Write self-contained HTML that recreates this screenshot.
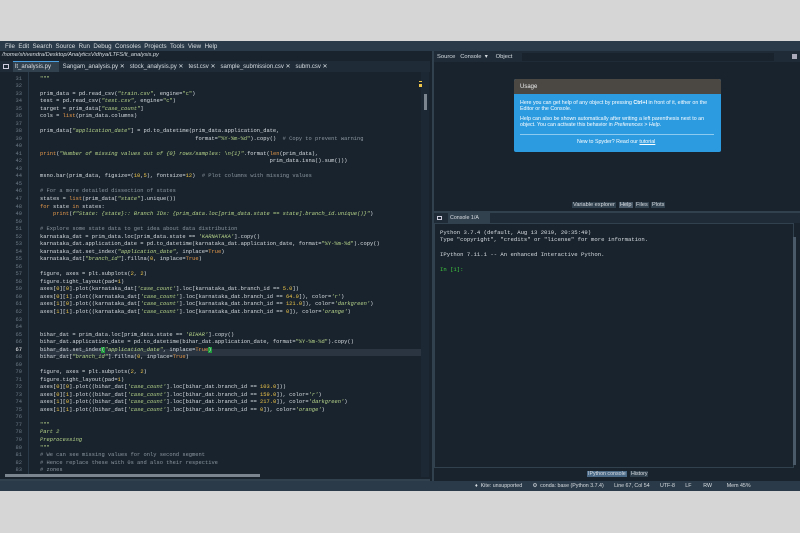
<!DOCTYPE html>
<html><head><meta charset="utf-8"><style>
*{margin:0;padding:0;box-sizing:border-box}
body{width:800px;height:533px;background:#d6d6d6;position:relative;overflow:hidden;font-family:"Liberation Sans",sans-serif}
.a{position:absolute}
#ide{left:0;top:41px;width:800px;height:450px;background:#19232d}
.mono{font-family:"Liberation Mono",monospace;font-size:5.4px;white-space:pre;color:#d8dde2}
.ln{position:absolute;top:0;left:0;width:22px;text-align:right;color:#6c7a86}
.cd{position:absolute;top:0;left:40px}
.s{color:#b7d58a}.si{color:#b7d58a;font-style:italic}.k{color:#e79a4b}.n{color:#f0c74a}.c{color:#8a96a0}.g{color:#b7d58a;font-style:italic}
.ui{font-size:5.3px;color:#d8dde2}
</style></head><body>
<div id="ide" class="a">
 <div class="a" style="left:0;top:0;width:800px;height:10px;background:#2a3a48"></div>
 <div class="a ui" style="left:5px;top:1.5px;white-space:pre;font-size:6.2px">File  Edit  Search  Source  Run  Debug  Consoles  Projects  Tools  View  Help</div>
 <div class="a ui" style="left:2px;top:11px;font-style:italic;font-size:5.7px">/home/shivendra/Desktop/AnalyticsVidhya/LTFS/lt_analysis.py</div>
 <div class="a" style="left:0;top:20px;width:430px;height:11px;background:#1f2c38"></div>
 <div class="a" style="left:3px;top:23px;width:6px;height:5px;border:1px solid #ccd"></div>
 <div class="a" style="left:13px;top:20px;width:46px;height:11px;background:#32414e;border-top:1px solid #4aa0e0"></div>
 <div class="a ui" style="left:15px;top:22px;white-space:pre;font-size:6px">lt_analysis.py       Sangam_analysis.py ✕   stock_analysis.py ✕   test.csv ✕   sample_submission.csv ✕   subm.csv ✕</div>
 <div class="a" style="left:432px;top:10px;width:368px;height:11px;background:#1f2c38"></div>
 <div class="a ui" style="left:437px;top:13px;white-space:pre;font-size:5.8px">Source   Console  ▾     Object</div>
 <div class="a" style="left:522px;top:12px;width:252px;height:8px;background:#19232d"></div>
 <div class="a" style="left:792px;top:13px;width:5px;height:5px;background:#aab"></div>
 <div class="a" style="left:432px;top:10px;width:2px;height:440px;background:#32414e"></div>
 <div class="a" style="left:514px;top:38px;width:207px;height:73px;background:#2d9be0;border-radius:2px"></div>
 <div class="a" style="left:514px;top:38px;width:207px;height:15px;background:#4b4844;border-radius:2px 2px 0 0"></div>
 <div class="a ui" style="left:520px;top:43px;font-size:6px;color:#eee">Usage</div>
 <div class="a ui" style="left:520px;top:59px;width:200px;color:#fff;line-height:6.2px">Here you can get help of any object by pressing <b>Ctrl+I</b> in front of it, either on the Editor or the Console.</div>
 <div class="a ui" style="left:520px;top:75px;width:200px;color:#fff;line-height:6.2px">Help can also be shown automatically after writing a left parenthesis next to an object. You can activate this behavior in <i>Preferences &gt; Help</i>.</div>
 <div class="a" style="left:520px;top:93px;width:194px;height:1px;background:#8ccaf0"></div>
 <div class="a ui" style="left:577px;top:98px;color:#fff">New to Spyder? Read our <u>tutorial</u></div>
 <div class="a ui" style="left:572px;top:161px;white-space:pre;background:#32414e;padding:0 1px;font-size:5.6px">Variable explorer</div>
 <div class="a ui" style="left:619px;top:161px;background:#4b5a68;padding:0 1px;font-size:5.6px">Help</div>
 <div class="a ui" style="left:635px;top:161px;background:#32414e;padding:0 1px;font-size:5.6px">Files</div>
 <div class="a ui" style="left:651px;top:161px;background:#32414e;padding:0 1px;font-size:5.6px">Plots</div>
 <div class="a" style="left:434px;top:170px;width:366px;height:2px;background:#32414e"></div>
 <div class="a" style="left:434px;top:172px;width:366px;height:10px;background:#1f2c38"></div>
 <div class="a" style="left:448px;top:172px;width:42px;height:10px;background:#32414e"></div>
 <div class="a ui" style="left:450px;top:174px">Console 1/A</div>
 <div class="a" style="left:437px;top:175px;width:5px;height:4px;border:1px solid #ccd"></div>
 <div class="a" style="left:434px;top:182px;width:360px;height:245px;border:1px solid #32414e"></div>
 <div class="a mono" style="left:440px;top:188px;line-height:7.4px;font-size:5.6px">Python 3.7.4 (default, Aug 13 2019, 20:35:49)
Type "copyright", "credits" or "license" for more information.

IPython 7.11.1 -- An enhanced Interactive Python.

<span style="color:#3fcb3f">In [1]:</span></div>
 <div class="a" style="left:793px;top:196px;width:3px;height:228px;background:#4b5a68"></div>
 <div class="a ui" style="left:587px;top:430px;background:#4b6a88;padding:0 1px">IPython console</div>
 <div class="a ui" style="left:630px;top:430px;background:#32414e;padding:0 1px">History</div>
 <div class="a" style="left:28px;top:31px;width:1px;height:404px;background:#2a3a48"></div>
 <div class="a" style="left:40px;top:308px;width:382px;height:7px;background:#2a3541"></div>
 <div class="a" style="left:421px;top:31px;width:8px;height:405px;background:#1c2833"></div>
 <div class="a" style="left:424px;top:53px;width:3px;height:16px;background:#7a8590"></div>
 <div class="a" style="left:419px;top:43px;width:3px;height:3px;background:#f0c74a"></div>
 <div class="a" style="left:419px;top:40px;width:3px;height:1px;background:#f0c74a"></div>
 <div class="a" style="left:5px;top:433px;width:255px;height:3px;background:#7a8590"></div>
 <div class="a" style="left:0;top:438px;width:430px;height:2px;background:#32414e"></div>
 <div class="a mono" style="left:0;top:34.5px;width:421px;height:398px;overflow:hidden;line-height:7.53px"><div class="ln">31
32
33
34
35
36
37
38
39
40
41
42
43
44
45
46
47
48
49
50
51
52
53
54
55
56
57
58
59
60
61
62
63
64
65
66
<span style="color:#fff">67</span>
68
69
70
71
72
73
74
75
76
77
78
79
80
81
82
83</div><div class="cd"><span class="s">"""</span>

prim_data = pd.read_csv(<span class="si">"train.csv"</span>, engine=<span class="s">"c"</span>)
test = pd.read_csv(<span class="si">"test.csv"</span>, engine=<span class="s">"c"</span>)
target = prim_data[<span class="si">"case_count"</span>]
cols = <span class="k">list</span>(prim_data.columns)

prim_data[<span class="si">"application_date"</span>] = pd.to_datetime(prim_data.application_date,
                                                format=<span class="s">"%Y-%m-%d"</span>).copy()  <span class="c"># Copy to prevent warning</span>

<span class="k">print</span>(<span class="si">"Number of missing values out of {0} rows/samples: \n{1}"</span>.format(<span class="k">len</span>(prim_data),
                                                                       prim_data.isna().sum()))

msno.bar(prim_data, figsize=(<span class="n">10</span>,<span class="n">5</span>), fontsize=<span class="n">12</span>)  <span class="c"># Plot columns with missing values</span>

<span class="c"># For a more detailed dissection of states</span>
states = <span class="k">list</span>(prim_data[<span class="si">"state"</span>].unique())
<span class="k">for</span> state <span class="k">in</span> states:
    <span class="k">print</span>(<span class="si">f"State: {state}:: Branch IDs: {prim_data.loc[prim_data.state == state].branch_id.unique()}"</span>)

<span class="c"># Explore some state data to get idea about data distribution</span>
karnataka_dat = prim_data.loc[prim_data.state == <span class="si">'KARNATAKA'</span>].copy()
karnataka_dat.application_date = pd.to_datetime(karnataka_dat.application_date, format=<span class="s">"%Y-%m-%d"</span>).copy()
karnataka_dat.set_index(<span class="si">"application_date"</span>, inplace=<span class="k">True</span>)
karnataka_dat[<span class="si">"branch_id"</span>].fillna(<span class="n">0</span>, inplace=<span class="k">True</span>)

figure, axes = plt.subplots(<span class="n">2</span>, <span class="n">2</span>)
figure.tight_layout(pad=<span class="n">1</span>)
axes[<span class="n">0</span>][<span class="n">0</span>].plot(karnataka_dat[<span class="si">'case_count'</span>].loc[karnataka_dat.branch_id == <span class="n">5.0</span>])
axes[<span class="n">0</span>][<span class="n">1</span>].plot((karnataka_dat[<span class="si">'case_count'</span>].loc[karnataka_dat.branch_id == <span class="n">64.0</span>]), color=<span class="si">'r'</span>)
axes[<span class="n">1</span>][<span class="n">0</span>].plot((karnataka_dat[<span class="si">'case_count'</span>].loc[karnataka_dat.branch_id == <span class="n">121.0</span>]), color=<span class="si">'darkgreen'</span>)
axes[<span class="n">1</span>][<span class="n">1</span>].plot((karnataka_dat[<span class="si">'case_count'</span>].loc[karnataka_dat.branch_id == <span class="n">0</span>]), color=<span class="si">'orange'</span>)


bihar_dat = prim_data.loc[prim_data.state == <span class="si">'BIHAR'</span>].copy()
bihar_dat.application_date = pd.to_datetime(bihar_dat.application_date, format=<span class="s">"%Y-%m-%d"</span>).copy()
bihar_dat.set_index<span style="background:#1e9b3a">(</span><span class="si">"application_date"</span>, inplace=<span class="k">True</span><span style="background:#1e9b3a">)</span>
bihar_dat[<span class="si">"branch_id"</span>].fillna(<span class="n">0</span>, inplace=<span class="k">True</span>)

figure, axes = plt.subplots(<span class="n">2</span>, <span class="n">2</span>)
figure.tight_layout(pad=<span class="n">1</span>)
axes[<span class="n">0</span>][<span class="n">0</span>].plot((bihar_dat[<span class="si">'case_count'</span>].loc[bihar_dat.branch_id == <span class="n">103.0</span>]))
axes[<span class="n">0</span>][<span class="n">1</span>].plot((bihar_dat[<span class="si">'case_count'</span>].loc[bihar_dat.branch_id == <span class="n">159.0</span>]), color=<span class="si">'r'</span>)
axes[<span class="n">1</span>][<span class="n">0</span>].plot((bihar_dat[<span class="si">'case_count'</span>].loc[bihar_dat.branch_id == <span class="n">217.0</span>]), color=<span class="si">'darkgreen'</span>)
axes[<span class="n">1</span>][<span class="n">1</span>].plot((bihar_dat[<span class="si">'case_count'</span>].loc[bihar_dat.branch_id == <span class="n">0</span>]), color=<span class="si">'orange'</span>)

<span class="s">"""</span>
<span class="g">Part 2</span>
<span class="g">Preprocessing</span>
<span class="s">"""</span>
<span class="c"># We can see missing values for only second segment</span>
<span class="c"># Hence replace these with 0s and also their respective</span>
<span class="c"># zones</span></div></div>
 <div class="a" style="left:0;top:440px;width:800px;height:10px;background:#2a3a48"></div>
 <div class="a ui" style="left:475px;top:442px;white-space:pre">♦  Kite: unsupported       ⚙  conda: base (Python 3.7.4)       Line 67, Col 54       UTF-8       LF        RW          Mem 45%</div>
</div>
</body></html>
